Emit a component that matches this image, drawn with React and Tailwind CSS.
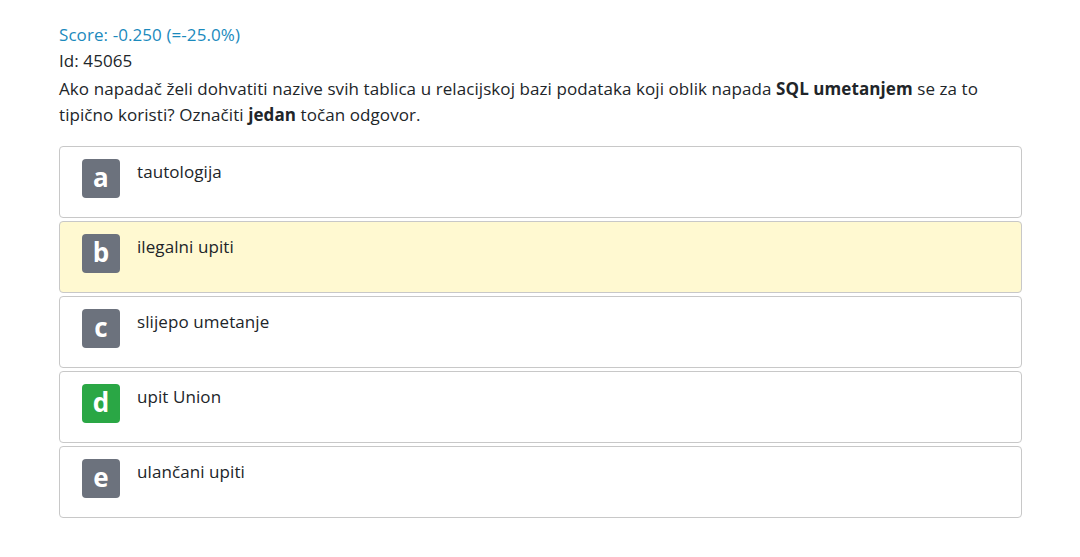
const options = [
  { letter: 'a', text: 'tautologija' },
  { letter: 'b', text: 'ilegalni upiti', selected: true },
  { letter: 'c', text: 'slijepo umetanje' },
  { letter: 'd', text: 'upit Union', correct: true },
  { letter: 'e', text: 'ulančani upiti' },
]

export default function App() {
  return (
    <div className="min-h-[557px] bg-white text-[#212529] pl-[59px] pr-[58px] pt-[22px] font-['Open_Sans',sans-serif] text-[17px] tracking-[0.08px] leading-[26px]">
      <div className="text-[#1b8abd]">Score: -0.250 (=-25.0%)</div>
      <div>Id: 45065</div>
      <div className="mt-[2px]">
        Ako napadač želi dohvatiti nazive svih tablica u relacijskoj bazi podataka koji oblik napada <b>SQL umetanjem</b> se za to tipično koristi? Označiti <b>jedan</b> točan odgovor.
      </div>

      <div className="mt-[18px] flex flex-col gap-[3px]">
        {options.map((o) => (
          <div
            key={o.letter}
            className={`h-[72px] rounded-[4px] border border-[#c8c8c8] flex items-start gap-[17px] pl-[22px] pt-[12px] ${
              o.selected ? 'bg-[#fff9d1]' : 'bg-white'
            }`}
          >
            <div
              className={`w-[38px] h-[39px] rounded-[4px] flex items-center justify-center text-white font-bold text-[26px] leading-none pb-[3px] ${
                o.correct ? 'bg-[#2aa745]' : 'bg-[#6c727d]'
              }`}
            >
              {o.letter}
            </div>
            <div>{o.text}</div>
          </div>
        ))}
      </div>
    </div>
  )
}
